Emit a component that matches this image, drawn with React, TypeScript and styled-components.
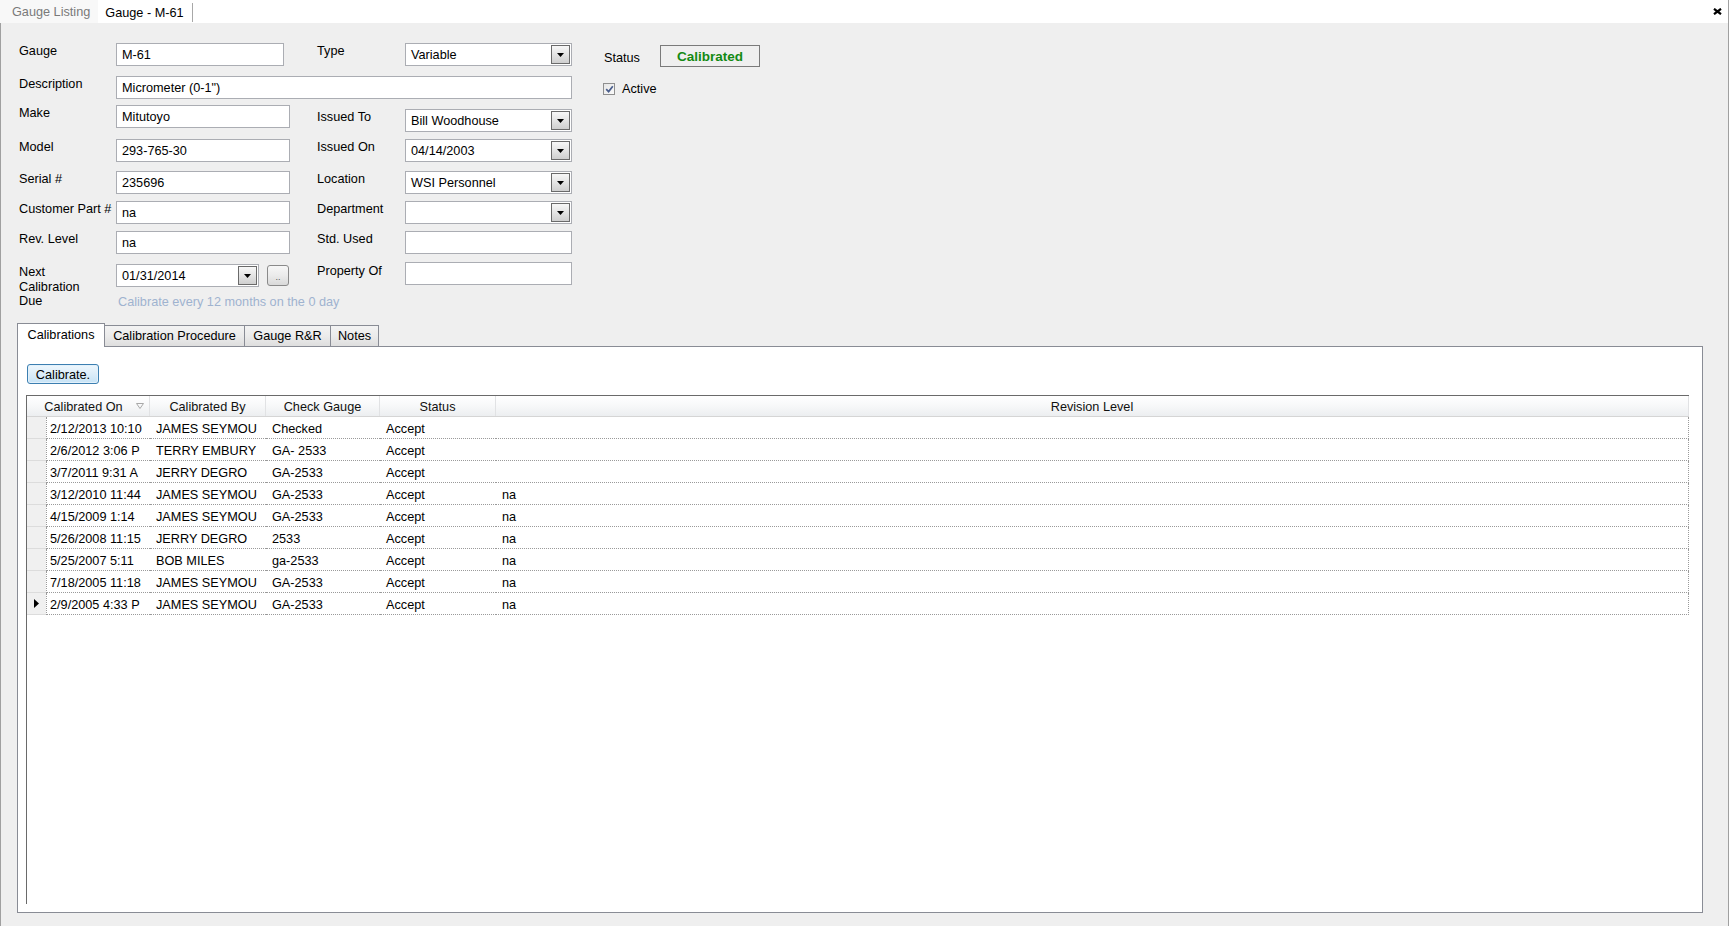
import React from "react";
import styled, { createGlobalStyle } from "styled-components";

const GlobalStyle = createGlobalStyle`
  html, body { margin: 0; padding: 0; }
  body {
    background: #efefef;
    font-family: "Liberation Sans", Arial, sans-serif;
    font-size: 12.7px;
    color: #000;
  }
  * { box-sizing: border-box; }
`;

const Window = styled.div`
  width: 1729px;
  height: 926px;
  display: flex;
  flex-direction: column;
  overflow: hidden;
  background: #efefef;
`;

const DocStrip = styled.div`
  height: 23px;
  flex-shrink: 0;
  background: #fff;
  display: flex;
  align-items: stretch;
  border-right: 1px solid #a0a0a0;
`;

const DocTab = styled.div<{ $active?: boolean }>`
  display: flex;
  align-items: center;
  padding: ${(p) => (p.$active ? "0 8px 0 7px" : "0 8px 0 12px")};
  margin: ${(p) => (p.$active ? "3px 0 1px" : "0")};
  background: ${(p) => (p.$active ? "#ffffff" : "#f8f8f8")};
  color: ${(p) => (p.$active ? "#000" : "#7a7a7a")};
  border-right: ${(p) => (p.$active ? "1px solid #a8a8a8" : "none")};
  white-space: nowrap;
`;

const CloseBtn = styled.div`
  margin-left: auto;
  margin-right: 6px;
  display: flex;
  align-items: center;
`;

const Body = styled.div`
  flex: 1;
  display: flex;
  flex-direction: column;
  border-left: 1px solid #a0a0a0;
  border-right: 1px solid #a0a0a0;
  padding: 20px 25px 13px 16px;
  min-height: 0;
`;

const FormGrid = styled.div`
  display: grid;
  grid-template-columns: 97px 201px 88px 167px 32px 1fr;
  grid-template-rows: 33px 29px 34px 32px 30px 30px 32px 60px;
  margin-left: 2px;
  flex-shrink: 0;
`;

const Cell = styled.div<{ $col: number; $row: number; $span?: number; $dy?: number }>`
  grid-column: ${(p) => p.$col} / span ${(p) => p.$span ?? 1};
  grid-row: ${(p) => p.$row};
  margin-top: ${(p) => p.$dy ?? 0}px;
  min-width: 0;
`;

const Label = styled(Cell)`
  line-height: 15px;
  padding-top: 1px;
  white-space: nowrap;
`;

const MultiLabel = styled(Cell)`
  line-height: 14.5px;
  padding-top: 2px;
`;

const Field = styled.div<{ $w: number }>`
  width: ${(p) => p.$w}px;
  height: 23px;
  background: #fff;
  border: 1px solid #abadb3;
  display: flex;
  align-items: center;
  padding-left: 5px;
  white-space: nowrap;
  overflow: hidden;
`;

const FieldText = styled.span`
  flex: 1;
  padding-top: 1px;
`;

const DropBtn = styled.div`
  align-self: stretch;
  width: 19px;
  margin: 1px 1px 1px 0;
  border: 1px solid #6a6a6a;
  background: linear-gradient(#f7f7f7, #e4e4e4 50%, #cfcfcf);
  display: flex;
  align-items: center;
  justify-content: center;
`;

const DateRow = styled.div`
  display: flex;
  gap: 8px;
  align-items: flex-start;
`;

const EllipsisBtn = styled.div`
  width: 22px;
  height: 21px;
  margin-top: 1px;
  border: 1px solid #8a8a8a;
  border-radius: 3px;
  background: linear-gradient(#f7f7f7, #ebebeb 50%, #d9d9d9);
  display: flex;
  align-items: flex-end;
  justify-content: center;
  font-size: 9px;
  color: #555;
  padding-bottom: 3px;
  line-height: 9px;
`;

const Hint = styled.div`
  margin-top: 8px;
  padding-left: 2px;
  line-height: 15px;
  color: #9fb3cf;
  white-space: nowrap;
`;

const StatusRow = styled.div`
  display: flex;
  align-items: center;
  gap: 20px;
`;

const StatusLabel = styled.span`
  padding-top: 4px;
`;

const StatusBox = styled.div`
  width: 100px;
  height: 22px;
  border: 1px solid #7a7a7a;
  display: flex;
  align-items: center;
  justify-content: center;
  font-weight: bold;
  color: #138a13;
  font-size: 13.5px;
`;

const CheckRow = styled.div`
  display: flex;
  align-items: center;
  gap: 7px;
  margin-left: -1px;
`;

const CheckBox = styled.div`
  width: 12px;
  height: 12px;
  border: 1px solid #8f8f8f;
  background: linear-gradient(135deg, #e6e6e6, #fafafa);
  display: flex;
  align-items: center;
  justify-content: center;
`;

const TabStrip = styled.div`
  height: 23px;
  display: flex;
  align-items: flex-end;
  flex-shrink: 0;
`;

const Tab = styled.div<{ $active?: boolean; $w: number }>`
  position: relative;
  width: ${(p) => p.$w}px;
  height: ${(p) => (p.$active ? 24 : 21)}px;
  margin-bottom: ${(p) => (p.$active ? -1 : 0)}px;
  margin-left: ${(p) => (p.$active ? 0 : -1)}px;
  z-index: ${(p) => (p.$active ? 2 : 1)};
  border: 1px solid #898c95;
  border-bottom: none;
  background: ${(p) => (p.$active ? "#fff" : "linear-gradient(#f3f3f3, #ebebeb 50%, #dedede)")};
  display: flex;
  align-items: center;
  justify-content: center;
  padding-bottom: ${(p) => (p.$active ? 2 : 0)}px;
  white-space: nowrap;
`;

const TabPage = styled.div`
  flex: 1;
  min-height: 0;
  background: #fff;
  border: 1px solid #898c95;
  display: flex;
  flex-direction: column;
  padding: 17px 13px 8px 8px;
`;

const CalibrateBtn = styled.div`
  align-self: flex-start;
  width: 72px;
  height: 20px;
  margin-left: 1px;
  border: 1px solid #3c7fb1;
  border-radius: 3px;
  background: linear-gradient(#eef7fd, #dcedf9 50%, #c6e3f6);
  box-shadow: inset 0 0 0 1px #e3f1fb;
  display: flex;
  align-items: center;
  justify-content: center;
  padding-top: 1px;
`;

const Grid = styled.div`
  flex: 1;
  margin-top: 11px;
  border-left: 1px solid #6a6a6a;
  border-top: 1px solid #6a6a6a;
  background: #fff;
  display: flex;
  flex-direction: column;
`;

const cols = "19px 104px 116px 114px 116px 1fr";

const HeaderRow = styled.div`
  display: grid;
  grid-template-columns: ${cols};
  height: 21px;
  background: linear-gradient(#ffffff, #f7f8f9 50%, #eceef0);
  border-bottom: 1px solid #d5d5d5;
`;

const HeadCell = styled.div<{ $padRight?: number; $noSep?: boolean }>`
  position: relative;
  display: flex;
  align-items: center;
  justify-content: center;
  padding-right: ${(p) => p.$padRight ?? 0}px;
  padding-top: 2px;
  border-right: ${(p) => (p.$noSep ? "none" : "1px solid #e1e2e4")};
  white-space: nowrap;
  color: #111;
`;

const SortGlyph = styled.svg`
  position: absolute;
  right: 5px;
  top: 7px;
`;

const DataRow = styled.div`
  display: grid;
  grid-template-columns: ${cols};
  height: 22px;
`;

const RowHead = styled.div`
  background: #f0f0f0;
  border-bottom: 1px solid #dcdcdc;
  display: flex;
  align-items: center;
  justify-content: center;
`;

const DataCell = styled.div<{ $first?: boolean; $last?: boolean }>`
  display: flex;
  align-items: center;
  padding-left: ${(p) => (p.$first ? 3 : 6)}px;
  padding-top: 2px;
  border-bottom: 1px dotted #9a9a9a;
  border-left: ${(p) => (p.$first ? "1px dotted #9a9a9a" : "none")};
  border-right: ${(p) => (p.$last ? "1px dotted #9a9a9a" : "none")};
  white-space: nowrap;
  overflow: hidden;
`;

const Arrow = () => (
  <svg width="7" height="4" viewBox="0 0 7 4">
    <polygon points="0,0 7,0 3.5,4" fill="#000" />
  </svg>
);

const Combo = ({ w, text }: { w: number; text: string }) => (
  <Field $w={w} style={{ paddingRight: 0 }}>
    <FieldText>{text}</FieldText>
    <DropBtn>
      <Arrow />
    </DropBtn>
  </Field>
);

const rows = [
  ["2/12/2013 10:10", "JAMES SEYMOU", "Checked", "Accept", ""],
  ["2/6/2012 3:06 P", "TERRY EMBURY", "GA- 2533", "Accept", ""],
  ["3/7/2011 9:31 A", "JERRY DEGRO", "GA-2533", "Accept", ""],
  ["3/12/2010 11:44", "JAMES SEYMOU", "GA-2533", "Accept", "na"],
  ["4/15/2009 1:14", "JAMES SEYMOU", "GA-2533", "Accept", "na"],
  ["5/26/2008 11:15", "JERRY DEGRO", "2533", "Accept", "na"],
  ["5/25/2007 5:11", "BOB MILES", "ga-2533", "Accept", "na"],
  ["7/18/2005 11:18", "JAMES SEYMOU", "GA-2533", "Accept", "na"],
  ["2/9/2005 4:33 P", "JAMES SEYMOU", "GA-2533", "Accept", "na"],
];

export default function App() {
  return (
    <>
      <GlobalStyle />
      <Window>
        <DocStrip>
          <DocTab>Gauge Listing</DocTab>
          <DocTab $active>Gauge - M-61</DocTab>
          <CloseBtn>
            <svg width="9" height="7" viewBox="0 0 9 7">
              <path d="M1 0.8 L8 6.2 M8 0.8 L1 6.2" stroke="#000" strokeWidth="2.2" />
            </svg>
          </CloseBtn>
        </DocStrip>
        <Body>
          <FormGrid>
            <Label $col={1} $row={1}>Gauge</Label>
            <Cell $col={2} $row={1}>
              <Field $w={168}>
                <FieldText>M-61</FieldText>
              </Field>
            </Cell>
            <Label $col={3} $row={1}>Type</Label>
            <Cell $col={4} $row={1}>
              <Combo w={167} text="Variable" />
            </Cell>
            <Cell $col={6} $row={1} $dy={2}>
              <StatusRow>
                <StatusLabel>Status</StatusLabel>
                <StatusBox>Calibrated</StatusBox>
              </StatusRow>
            </Cell>

            <Label $col={1} $row={2}>Description</Label>
            <Cell $col={2} $row={2} $span={3}>
              <Field $w={456}>
                <FieldText>Micrometer (0-1")</FieldText>
              </Field>
            </Cell>
            <Cell $col={6} $row={2} $dy={6}>
              <CheckRow>
                <CheckBox>
                  <svg width="9" height="8" viewBox="0 0 9 8">
                    <path d="M1.2 4.2 L3.6 6.6 L7.8 1.2" stroke="#4a5e8c" strokeWidth="1.7" fill="none" />
                  </svg>
                </CheckBox>
                <span>Active</span>
              </CheckRow>
            </Cell>

            <Label $col={1} $row={3}>Make</Label>
            <Cell $col={2} $row={3}>
              <Field $w={174}>
                <FieldText>Mitutoyo</FieldText>
              </Field>
            </Cell>
            <Label $col={3} $row={3} $dy={4}>Issued To</Label>
            <Cell $col={4} $row={3} $dy={4}>
              <Combo w={167} text="Bill Woodhouse" />
            </Cell>

            <Label $col={1} $row={4}>Model</Label>
            <Cell $col={2} $row={4}>
              <Field $w={174}>
                <FieldText>293-765-30</FieldText>
              </Field>
            </Cell>
            <Label $col={3} $row={4}>Issued On</Label>
            <Cell $col={4} $row={4}>
              <Combo w={167} text="04/14/2003" />
            </Cell>

            <Label $col={1} $row={5}>Serial #</Label>
            <Cell $col={2} $row={5}>
              <Field $w={174}>
                <FieldText>235696</FieldText>
              </Field>
            </Cell>
            <Label $col={3} $row={5}>Location</Label>
            <Cell $col={4} $row={5}>
              <Combo w={167} text="WSI Personnel" />
            </Cell>

            <Label $col={1} $row={6}>Customer Part #</Label>
            <Cell $col={2} $row={6}>
              <Field $w={174}>
                <FieldText>na</FieldText>
              </Field>
            </Cell>
            <Label $col={3} $row={6}>Department</Label>
            <Cell $col={4} $row={6}>
              <Combo w={167} text="" />
            </Cell>

            <Label $col={1} $row={7}>Rev. Level</Label>
            <Cell $col={2} $row={7}>
              <Field $w={174}>
                <FieldText>na</FieldText>
              </Field>
            </Cell>
            <Label $col={3} $row={7}>Std. Used</Label>
            <Cell $col={4} $row={7}>
              <Field $w={167} />
            </Cell>

            <MultiLabel $col={1} $row={8}>
              Next
              <br />
              Calibration
              <br />
              Due
            </MultiLabel>
            <Cell $col={2} $row={8} $dy={1}>
              <DateRow>
                <Combo w={143} text="01/31/2014" />
                <EllipsisBtn>..</EllipsisBtn>
              </DateRow>
              <Hint>Calibrate every 12 months on the 0 day</Hint>
            </Cell>
            <Label $col={3} $row={8}>Property Of</Label>
            <Cell $col={4} $row={8} $dy={-1}>
              <Field $w={167} />
            </Cell>
          </FormGrid>

          <TabStrip>
            <Tab $active $w={88}>Calibrations</Tab>
            <Tab $w={141}>Calibration Procedure</Tab>
            <Tab $w={87}>Gauge R&amp;R</Tab>
            <Tab $w={49}>Notes</Tab>
          </TabStrip>
          <TabPage>
            <CalibrateBtn>Calibrate.</CalibrateBtn>
            <Grid>
              <HeaderRow>
                <HeadCell $noSep />
                <HeadCell $padRight={28}>
                  Calibrated On
                  <SortGlyph width="8" height="6" viewBox="0 0 8 6">
                    <polygon points="0.5,0.5 7.5,0.5 4,5.5" fill="none" stroke="#a8a8a8" strokeWidth="1" />
                  </SortGlyph>
                </HeadCell>
                <HeadCell>Calibrated By</HeadCell>
                <HeadCell>Check Gauge</HeadCell>
                <HeadCell>Status</HeadCell>
                <HeadCell>Revision Level</HeadCell>
              </HeaderRow>
              {rows.map((r, i) => (
                <DataRow key={i}>
                  <RowHead>
                    {i === rows.length - 1 && (
                      <svg width="5" height="9" viewBox="0 0 5 9">
                        <polygon points="0,0 5,4.5 0,9" fill="#000" />
                      </svg>
                    )}
                  </RowHead>
                  {r.map((c, j) => (
                    <DataCell key={j} $first={j === 0} $last={j === r.length - 1}>
                      {c}
                    </DataCell>
                  ))}
                </DataRow>
              ))}
            </Grid>
          </TabPage>
        </Body>
      </Window>
    </>
  );
}
